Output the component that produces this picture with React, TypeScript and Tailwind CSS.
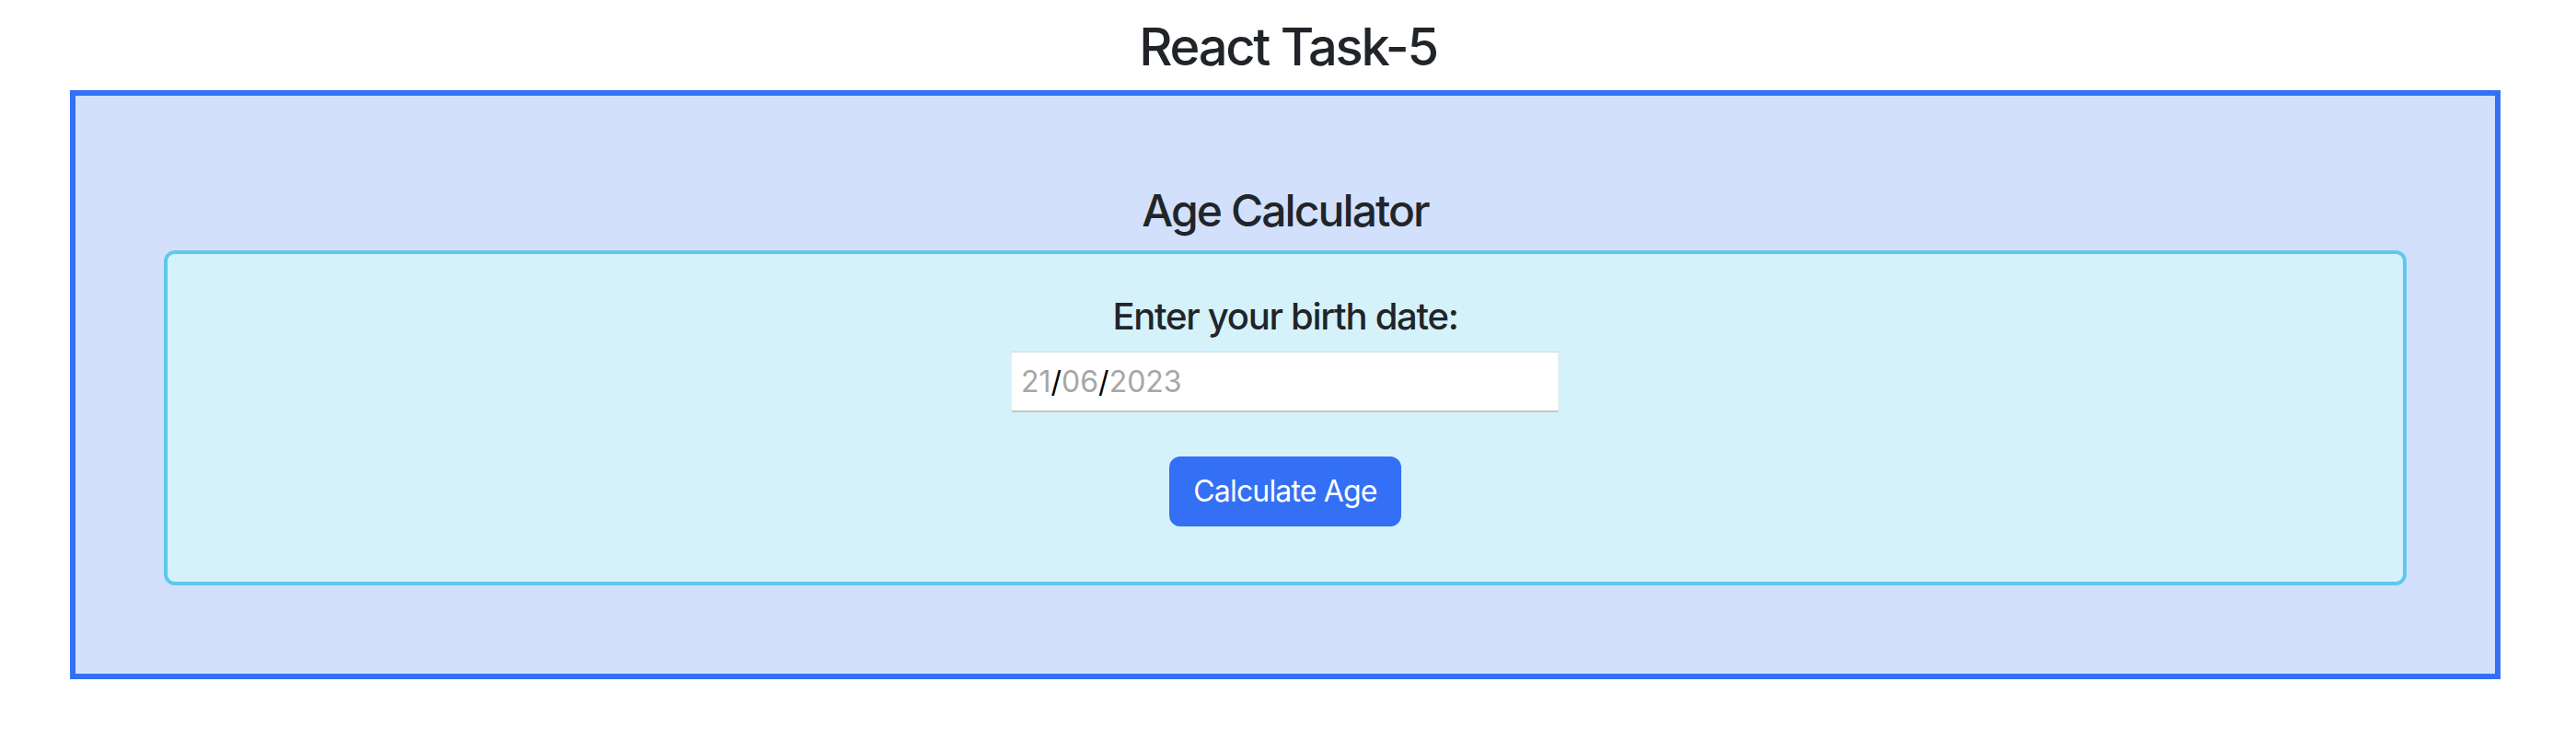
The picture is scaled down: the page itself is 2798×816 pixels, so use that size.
export default function App() {
  return (
    <div className="min-h-screen bg-white font-['Inter',sans-serif] text-[#212529]">
      <h1 className="pt-[18px] mb-[13px] text-center text-[56px] leading-[67px] font-medium tracking-[-0.04em]">
        React Task-5
      </h1>

      <div className="ml-[76px] w-[2640px] border-[6px] border-[#3370f5] bg-[#d3e0fb] p-24">
        <h2 className="mb-[14px] text-center text-[48px] leading-[58px] font-medium tracking-[-0.04em]">
          Age Calculator
        </h2>

        <div className="flex flex-col items-center rounded-xl border-4 border-[#60c8ec] bg-[#d5f2fb] pt-[44px] pb-[60px]">
          <label className="text-[40px] leading-[48px] font-medium tracking-[-0.032em]">
            Enter your birth date:
          </label>

          {/* date field drawn as a box so the grey digits / black slashes match */}
          <div className="mt-[14px] flex h-[66px] w-[594px] items-center border-t border-r border-b-2 border-t-[#c3dde7] border-r-[#e8eaeb] border-b-[#c2c6c9] bg-white pl-[10px] text-[32px] leading-none">
            <span className="text-[#a6a6a6]">21</span>
            <span className="text-black">/</span>
            <span className="text-[#a6a6a6]">06</span>
            <span className="text-black">/</span>
            <span className="text-[#a6a6a6]">2023</span>
          </div>

          <button
            type="button"
            className="mt-12 h-[76px] w-[252px] rounded-xl bg-[#3370f5] text-[32px] tracking-[-0.026em] text-white"
          >
            Calculate Age
          </button>
        </div>
      </div>
    </div>
  );
}
